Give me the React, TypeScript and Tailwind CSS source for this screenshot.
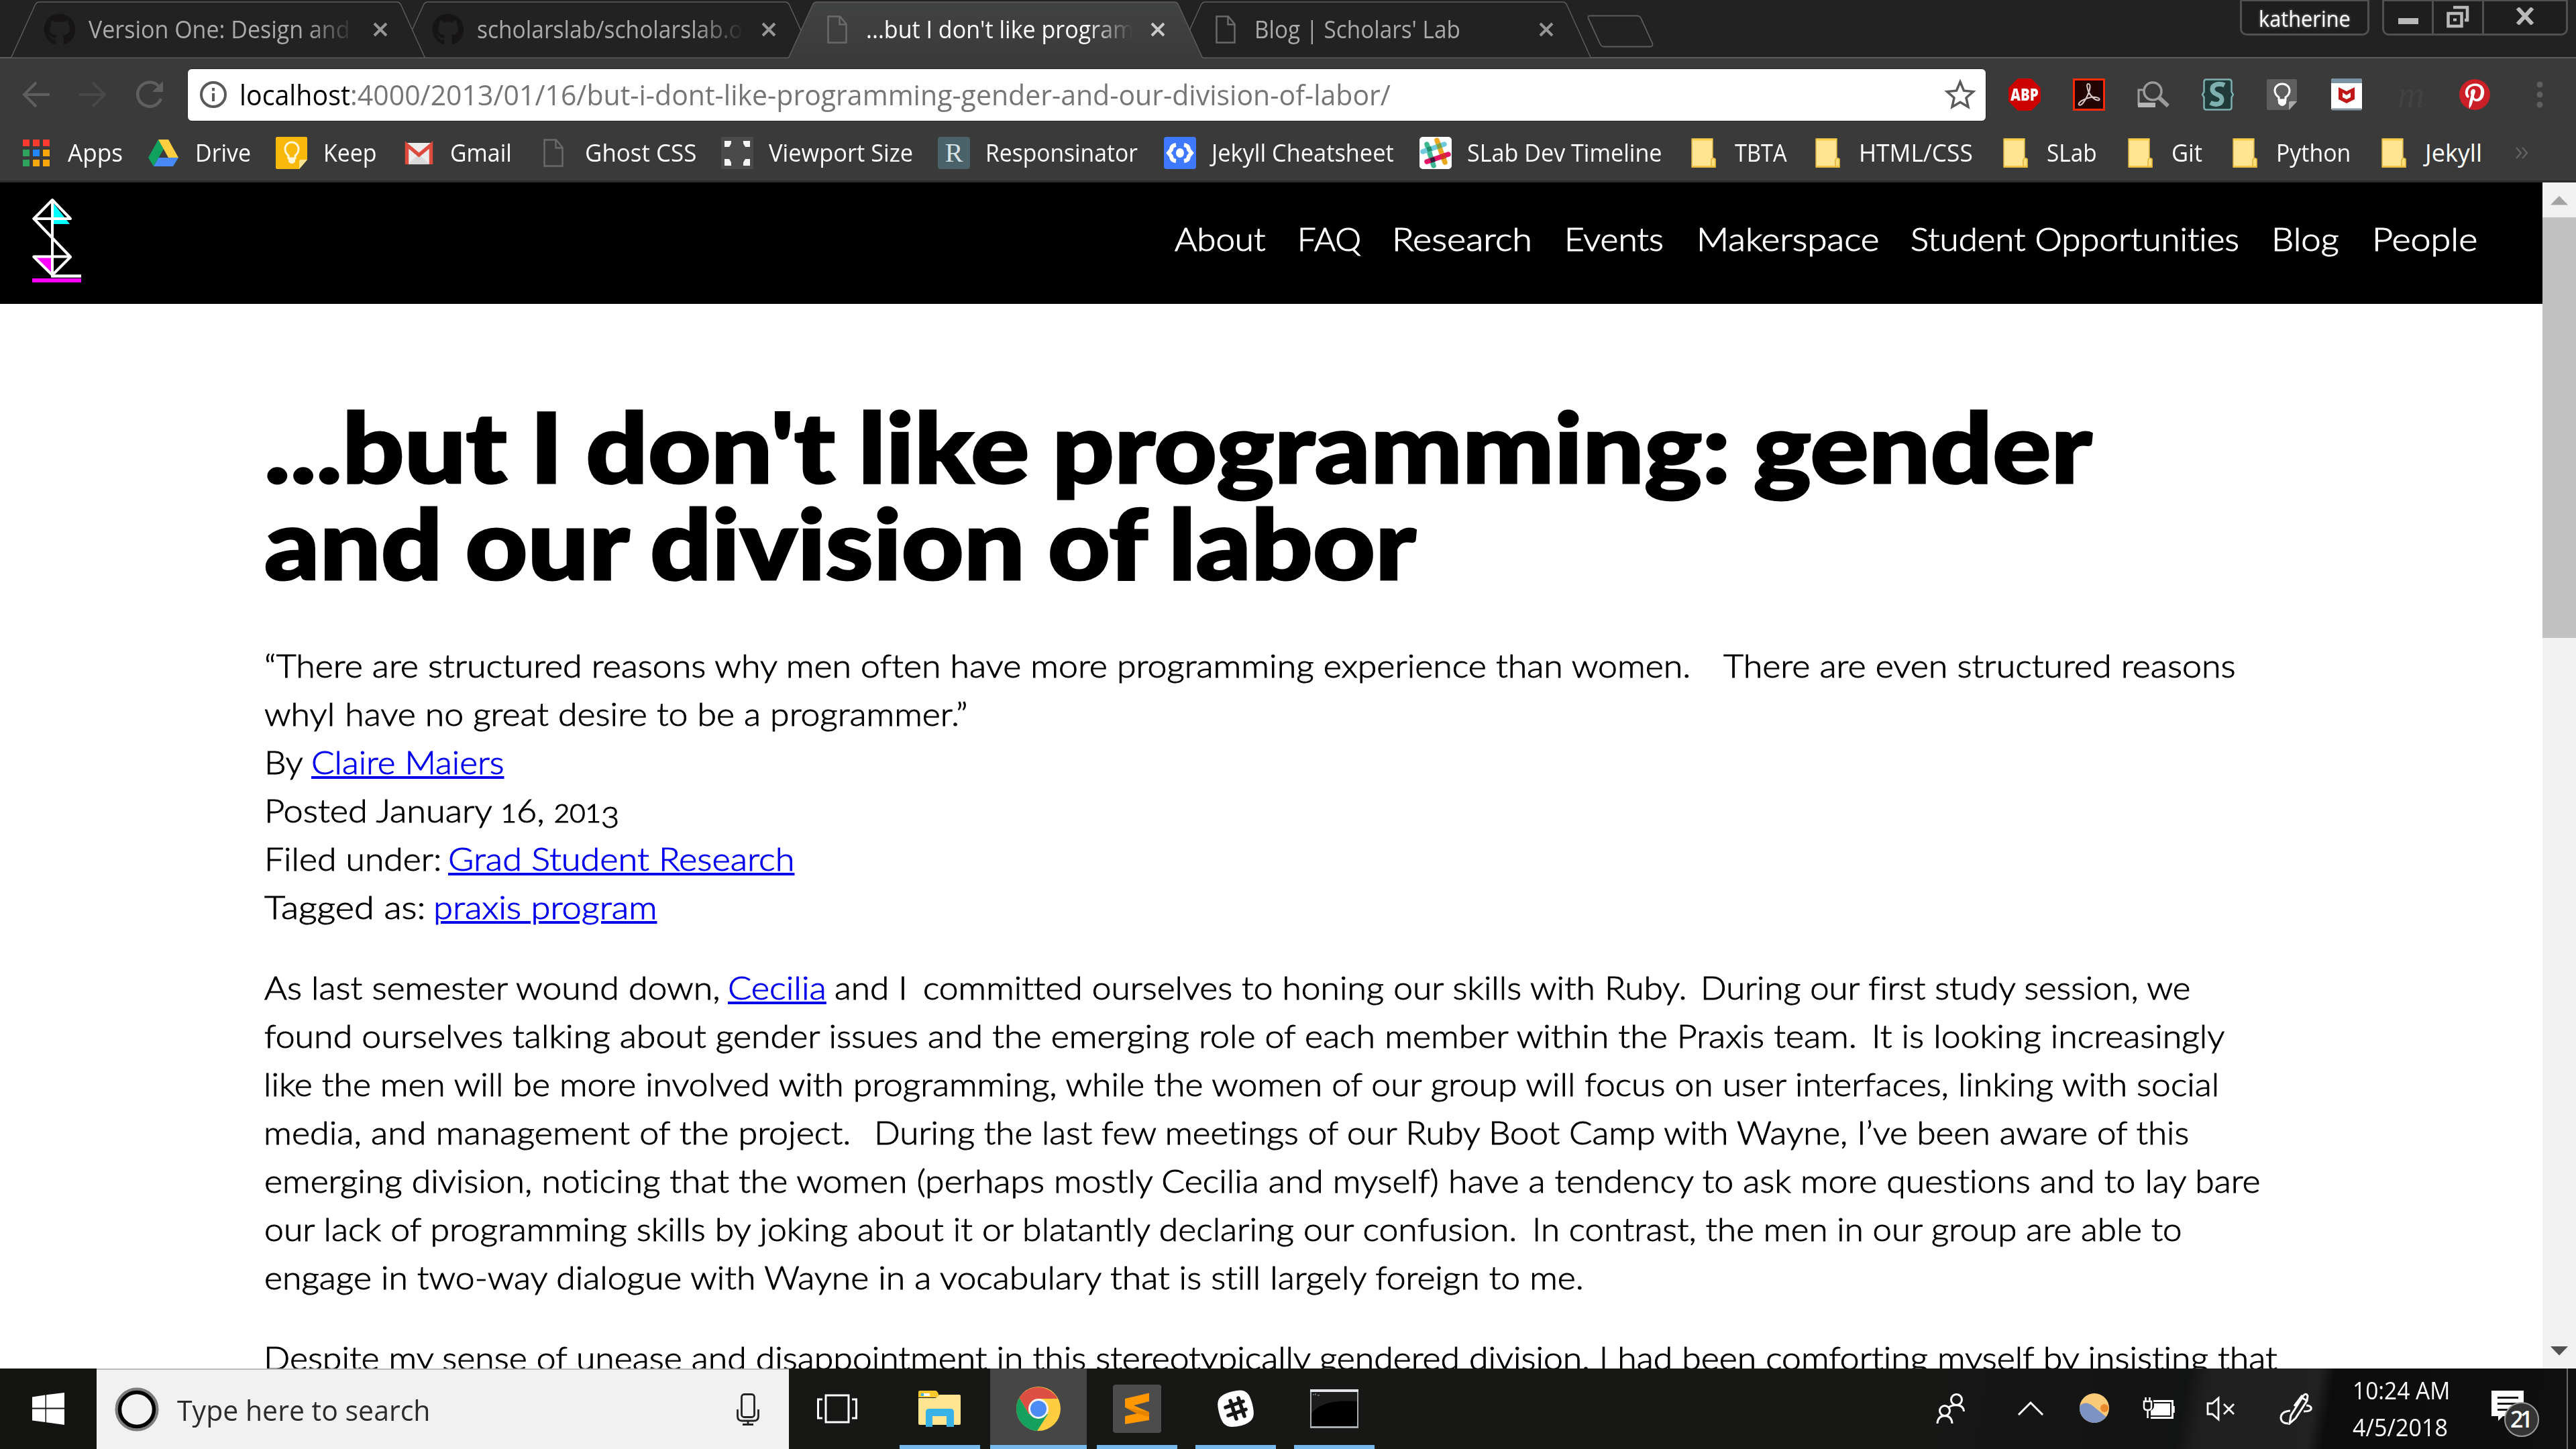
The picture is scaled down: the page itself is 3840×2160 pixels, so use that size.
import { useLayoutEffect, useRef, useState, type ReactNode } from "react";
import { FaGithub, FaPinterestP } from "react-icons/fa";

/* Text squeezed or stretched horizontally to an exact width. */
function Fit({ w, children, className = "" }: { w: number; children: ReactNode; className?: string }) {
  const ref = useRef<HTMLSpanElement>(null);
  const [scale, setScale] = useState(1);
  useLayoutEffect(() => {
    if (ref.current && ref.current.offsetWidth > 0) setScale(w / ref.current.offsetWidth);
  }, [w]);
  return (
    <span className="block shrink-0 whitespace-pre" style={{ width: w }}>
      <span ref={ref} className={`inline-block origin-left ${className}`} style={{ transform: `scaleX(${scale})` }}>
        {children}
      </span>
    </span>
  );
}

type Seg = [text: ReactNode, from: number, to: number, link?: boolean];

/* A line made of runs, each with its own start and end. */
function Line({ segs, origin }: { segs: Seg[]; origin: number }) {
  return (
    <div className="flex">
      {segs.map(([text, from, to, link], i) => (
        <div key={i} style={{ marginLeft: from - (i ? segs[i - 1][2] : origin) }}>
          <Fit
            w={to - from}
            className={link ? "text-[#0000ee] underline decoration-[4px] underline-offset-[3px]" : ""}
          >
            {text}
          </Fit>
        </div>
      ))}
    </div>
  );
}

const PageIcon = () => (
  <svg viewBox="0 0 30 42" className="h-[42px] w-[30px] shrink-0" fill="none" stroke="#6a6a6a" strokeWidth="2.5">
    <path d="M1.5 1.5H19L28.5 13V40.500H1.500Z" />
    <path d="M18.500 2V13.500H28" />
  </svg>
);

function Tab({
  active,
  icon,
  title,
  w,
  fade,
  z,
}: {
  active?: boolean;
  icon: "git" | "page";
  title: string;
  w: number;
  fade?: boolean;
  z: string;
}) {
  return (
    <div className={`relative -mr-[40.700px] h-[87px] w-[620px] shrink-0 ${z}`}>
      <svg viewBox="0 0 620 87" className="absolute inset-0 h-full w-full">
        <defs>
          <linearGradient id="activeTab" x1="0" y1="0" x2="0" y2="1">
            <stop offset="0" stopColor="#414342" />
            <stop offset="1" stopColor="#3a3a3a" />
          </linearGradient>
        </defs>
        <path
          d="M0 87Q2 86 3 83L37 8Q39 3 44 3H576Q581 3 583 8L617 83Q618 86 620 87Z"
          fill={active ? "url(#activeTab)" : "#222222"}
        />
        <path
          d="M0 87Q2 86 3 83L37 8Q39 3 44 3H576Q581 3 583 8L617 83Q618 86 620 87"
          fill="none"
          stroke="#5c5c5c"
          strokeWidth="1.5"
        />
        {!active && <path d="M0 86.300H620" stroke="#5c5c5c" strokeWidth="1.5" />}
      </svg>
      <div className="relative flex h-[88px] items-center pl-[50px]">
        <div className="flex w-[67px] items-center">
          {icon === "git" ? (
            <FaGithub className="h-[48px] w-[48px] text-[#161414]" />
          ) : (
            <div className="ml-[9px]">
              <PageIcon />
            </div>
          )}
        </div>
        <div
          className={`flex h-[60px] w-[398px] items-center text-[36px] leading-[60px] ${
            active ? "text-white" : "text-[#aaaaaa]"
          } ${fade ? "[mask-image:linear-gradient(to_right,black_82%,transparent_100%)]" : ""}`}
        >
          <Fit w={w}>{title}</Fit>
        </div>
        <svg viewBox="0 0 24 24" className="ml-[25px] h-[24px] w-[24px]" stroke={active ? "#c9c9c9" : "#969696"} strokeWidth="4">
          <path d="M3 3L21 21M21 3L3 21" />
        </svg>
      </div>
    </div>
  );
}

const Folder = () => (
  <svg viewBox="0 0 48 48" className="h-[48px] w-[48px]">
    <path d="M7 3H38V32L42 33V45H7Z" fill="#ffe591" stroke="#dbb343" strokeWidth="1.500" />
    <path d="M8 4H38" stroke="#f6cf4a" strokeWidth="3" />
    <path d="M36 45V34Q38 30 42 33V45Z" fill="#fde07b" stroke="#e0b33a" strokeWidth="1.500" />
    <path d="M7 44.500H42" stroke="#edbf3b" strokeWidth="2.500" />
  </svg>
);

const bookmarkIcons: Record<string, ReactNode> = {
  apps: (
    <svg viewBox="0 0 48 48" className="h-[48px] w-[48px]">
      {[0, 1, 2].map((r) =>
        [0, 1, 2].map((c) => (
          <rect
            key={`${r}${c}`}
            x={4 + c * 15}
            y={4 + r * 15}
            width="10"
            height="10"
            fill={[["#fb3b30", "#fb3b30", "#fb3b30"], ["#2ea35b", "#2387fb", "#f9a60a"], ["#2ea35b", "#f9a60a", "#f9a60a"]][r][c]}
          />
        )),
      )}
    </svg>
  ),
  drive: (
    <svg viewBox="0 0 48 48" className="h-[48px] w-[48px]">
      <path d="M16 4L24 18L9 44L1 31Z" fill="#11a15e" />
      <path d="M16 4H31L46 31H31Z" fill="#ffcf41" />
      <path d="M16.500 31H46L38 44H9Z" fill="#4688f4" />
    </svg>
  ),
  keep: (
    <svg viewBox="0 0 48 48" className="h-[48px] w-[48px]">
      <path d="M2 0H45Q47 0 47 2V34L35 48H2Q0 48 0 46V2Q0 0 2 0Z" fill="#f8b90c" />
      <path d="M47 34L35 48V36Q35 34 37 34Z" fill="#fde293" />
      <path d="M19 28Q14 24 14 18A10 10 0 0 1 34 18Q34 24 29 28V32H19Z" fill="none" stroke="#fff5d8" strokeWidth="3" />
      <path d="M19 33H29V37Q27 40 24 40Q21 40 19 37Z" fill="#fff5d8" />
    </svg>
  ),
  gmail: (
    <svg viewBox="0 0 48 48" className="h-[48px] w-[48px]">
      <rect x="4" y="9" width="41" height="32" rx="3" fill="#ececec" />
      <path d="M8 41L24 26L41 41Z" fill="#d9d9d9" />
      <path d="M6.500 41V12L24.500 27L42.500 12V41" fill="none" stroke="#dd4b3e" strokeWidth="5.500" />
    </svg>
  ),
  page: (
    <div className="ml-[9px] flex">
      <PageIcon />
    </div>
  ),
  viewport: (
    <svg viewBox="0 0 48 48" className="h-[48px] w-[48px]">
      <rect width="48" height="48" fill="#4a4a4a" />
      <g fill="#f4f4f4">
        <path d="M5 6H15V10L12 15H5Z" />
        <path d="M33 6H43V15H36L33 10Z" />
        <path d="M5 33H12L15 38V43H5Z" />
        <path d="M36 33H43V43H33V38Z" />
      </g>
    </svg>
  ),
  resp: (
    <div className="flex h-[48px] w-[48px] items-center justify-center rounded-[4px] bg-[#4a636b] font-['Liberation_Serif',serif] text-[40px] leading-none text-[#d9e2e4]">
      R
    </div>
  ),
  cheat: (
    <svg viewBox="0 0 48 48" className="h-[48px] w-[48px]">
      <rect width="48" height="48" rx="4" fill="#3f79ff" />
      <path d="M18 12Q11 13 11 19L7 24L11 29Q11 35 18 36M30 12Q37 13 37 19L41 24L37 29Q37 35 30 36" fill="none" stroke="#fff" strokeWidth="6" />
      <ellipse cx="24" cy="24" rx="6" ry="7" fill="#fff" />
    </svg>
  ),
  slack: (
    <svg viewBox="0 0 48 48" className="h-[48px] w-[48px]">
      <rect width="48" height="48" rx="5" fill="#fff" />
      <g strokeWidth="7.500" strokeLinecap="round">
        <path d="M26 5L38 38" stroke="#eaa820" />
        <path d="M11 11L21 43" stroke="#3eb890" />
        <path d="M5 22L37 11" stroke="#6ecadc" />
        <path d="M11 37L43 26" stroke="#e01563" />
      </g>
      <rect x="11" y="15" width="7" height="7" transform="rotate(-18 14 18)" fill="#1f8f6c" />
      <rect x="26" y="10" width="7" height="7" transform="rotate(-18 30 14)" fill="#7fa23a" />
      <rect x="16" y="31" width="7" height="7" transform="rotate(-18 19 34)" fill="#3c1a3c" />
      <rect x="32" y="26" width="7" height="7" transform="rotate(-18 35 29)" fill="#d2351f" />
    </svg>
  ),
  folder: <Folder />,
};

const bookmarks: [icon: string, label: string, from: number, to: number][] = [
  ["apps", "Apps", 30, 183],
  ["drive", "Drive", 220, 374],
  ["keep", "Keep", 411, 562],
  ["gmail", "Gmail", 600, 763],
  ["page", "Ghost CSS", 801, 1038],
  ["viewport", "Viewport Size", 1075, 1361],
  ["resp", "Responsinator", 1398, 1696],
  ["cheat", "Jekyll Cheatsheet", 1735, 2078],
  ["slack", "SLab Dev Timeline", 2116, 2478],
  ["folder", "TBTA", 2515, 2664],
  ["folder", "HTML/CSS", 2700, 2941],
  ["folder", "SLab", 2980, 3126],
  ["folder", "Git", 3166, 3283],
  ["folder", "Python", 3322, 3504],
  ["folder", "Jekyll", 3544, 3700],
];

function Extensions() {
  return (
    <div className="ml-[33px] flex items-center gap-[48px]">
      <div className="flex h-[48px] w-[48px] items-center justify-center bg-[#cc0000] font-['Open_Sans',sans-serif] text-[24px] font-extrabold leading-none text-white [clip-path:polygon(29%_0,71%_0,100%_29%,100%_71%,71%_100%,29%_100%,0_71%,0_29%)]">
        <Fit w={42}>ABP</Fit>
      </div>
      <svg viewBox="0 0 48 48" className="h-[48px] w-[48px]">
        <rect x="1.500" y="1.500" width="45" height="45" fill="#230404" stroke="#fb2a05" strokeWidth="3" />
        <path
          d="M23 8C27 8 26 16 22 25C18 34 12 42 9 39C7 36 16 30 27 28C36 27 42 30 39 32C35 34 27 28 23 19C21 13 20 8 23 8Z"
          fill="none"
          stroke="#d8c8c8"
          strokeWidth="2"
        />
      </svg>
      <svg viewBox="0 0 48 48" className="h-[48px] w-[48px]" fill="none" stroke="#9b9b9b">
        <path d="M9 17H2V39H26" strokeWidth="3" />
        <path d="M1 36H27V43H1Z" fill="#b5b5b5" stroke="none" />
        <circle cx="23" cy="19" r="13" strokeWidth="3.500" fill="#3a3a3a" />
        <path d="M32 28L46 41" strokeWidth="6" />
      </svg>
      <svg viewBox="0 0 48 48" className="h-[48px] w-[48px]">
        <path
          d="M7 1.500H41Q44.500 1.500 44.500 5V20L47 24L44.500 28V43Q44.500 46.500 41 46.500H7Q3.500 46.500 3.500 43V28L1 24L3.500 20V5Q3.500 1.500 7 1.500Z"
          fill="#1f3a38"
          stroke="#7fb0b0"
          strokeWidth="2.500"
        />
        <path d="M34 10C26 6 15 9 16 17C17 25 31 23 30 32C29 39 20 40 13 36" fill="none" stroke="#7fb0b0" strokeWidth="7" />
      </svg>
      <svg viewBox="0 0 48 48" className="h-[48px] w-[48px]">
        <path d="M3 1H44Q46 1 46 3V35L35 47H3Q1 47 1 45V3Q1 1 3 1Z" fill="#5e5e5e" />
        <path d="M46 34L34 47V36Q34 34 36 34Z" fill="#a9a9a9" />
        <path d="M19 28Q13 24 13 18A11 10 0 0 1 35 18Q35 24 29 28V32H19Z" fill="none" stroke="#fff" strokeWidth="3" />
        <path d="M18 32H30V37Q27 41 24 41Q21 41 18 37Z" fill="#fff" />
      </svg>
      <svg viewBox="0 0 48 48" className="h-[48px] w-[48px]">
        <rect x="1" y="0" width="46" height="47" rx="3" fill="#fff" />
        <path d="M1 7V3Q1 0 4 0H44Q47 0 47 3V7Z" fill="#7993a5" />
        <path d="M2 46H46" stroke="#8797a1" strokeWidth="3" />
        <path d="M12 13L24 19L36 13V31L24 37L12 31Z" fill="#c01818" />
        <path d="M18 21L24 25L30 21V28L24 31L18 28Z" fill="#fff" />
      </svg>
      <div className="flex h-[48px] w-[48px] items-center justify-center font-['Liberation_Serif',serif] text-[56px] italic leading-none text-[#424242]">
        m
      </div>
      <div className="flex h-[48px] w-[48px] items-center">
        <div className="flex h-[46px] w-[46px] items-center justify-center rounded-full bg-[#cb2027]">
          <FaPinterestP className="mt-[3px] h-[38px] w-[34px] text-white" />
        </div>
      </div>
      <svg viewBox="0 0 48 48" className="h-[48px] w-[48px]" fill="#5f5f5f">
        <circle cx="24" cy="9" r="4.500" />
        <circle cx="24" cy="24" r="4.500" />
        <circle cx="24" cy="39" r="4.500" />
      </svg>
    </div>
  );
}

function WindowControls() {
  return (
    <div className="ml-auto flex items-start">
      <div className="mr-[19px] flex h-[53px] w-[193px] justify-center rounded-b-[10px] border-[3px] border-t-2 border-[#505050] bg-[#1e1e1e] text-[33px] leading-[51px] text-white [text-shadow:0_0_4px_#999]">
        <Fit w={137}>katherine</Fit>
      </div>
      <div className="mr-[12px] flex h-[53px] w-[277px] rounded-b-[10px] border-[3px] border-t-2 border-[#505050] bg-[#1e1e1e]">
        <div className="flex w-[74px] justify-center border-r-[3px] border-[#505050] pt-[25px]">
          <div className="h-[9px] w-[30px] bg-[#b9b9b9]" />
        </div>
        <div className="flex w-[75px] justify-center border-r-[3px] border-[#505050] pt-[6px]">
          <svg viewBox="0 0 34 34" className="h-[34px] w-[34px]" fill="none" stroke="#b9b9b9" strokeWidth="4.500">
            <path d="M10 3H31V22H27" />
            <rect x="2.500" y="12" width="20" height="19" />
            <rect x="10" y="19.500" width="5" height="4" fill="#b9b9b9" stroke="none" />
          </svg>
        </div>
        <div className="flex flex-1 justify-center pt-[9px]">
          <svg viewBox="0 0 30 26" className="h-[26px] w-[30px]" stroke="#b9b9b9" strokeWidth="6">
            <path d="M4 1L26 25M26 1L4 25" />
          </svg>
        </div>
      </div>
    </div>
  );
}

function Chrome() {
  return (
    <header className="h-[272px] border-b-[3px] border-[#2a2a2a] bg-[#3a3a3a] font-['Open_Sans','Noto_Sans',sans-serif]">
      <div className="flex h-[87px] items-start border-b-2 border-[#5c5c5c] bg-[#222222]">
        <div className="flex pl-[15px]">
          <Tab icon="git" title="Version One: Design and" w={390} fade z="z-10" />
          <Tab icon="git" title="scholarslab/scholarslab.o" w={396} fade z="z-0" />
          <Tab icon="page" title="...but I don't like program" w={400} fade active z="z-20" />
          <Tab icon="page" title="Blog | Scholars' Lab" w={307} z="z-0" />
        </div>
        <svg viewBox="0 0 102 50" className="ml-[33px] mt-[22px] h-[50px] w-[102px]" fill="none" stroke="#5c5c5c" strokeWidth="1.800">
          <path d="M5 1.500H75Q79 1.500 81 5L98 42Q100 47 95 47.500H26Q22 47.500 20 43L3 6Q1 1.500 5 1.500Z" />
        </svg>
        <WindowControls />
      </div>
      <div className="flex h-[108px] items-center pl-[30px]">
        <div className="flex gap-[36px]">
          <svg viewBox="0 0 48 48" className="h-[48px] w-[48px]" fill="none" stroke="#5f5f5f" strokeWidth="4">
            <path d="M44 24H7M24 6L6 24L24 42" />
          </svg>
          <svg viewBox="0 0 48 48" className="h-[48px] w-[48px]" fill="none" stroke="#484848" strokeWidth="4">
            <path d="M4 24H41M24 6L42 24L24 42" />
          </svg>
          <svg viewBox="0 0 48 48" className="h-[48px] w-[48px]" fill="none" stroke="#5f5f5f" strokeWidth="4.500">
            <path d="M38 11A18 18 0 1 0 42 30" />
            <path d="M45 4V20H29Z" fill="#5f5f5f" stroke="none" />
          </svg>
        </div>
        <div className="ml-[33px] flex h-[79px] w-[2682px] items-center rounded-[7px] border border-[#262626] bg-white">
          <svg viewBox="0 0 44 44" className="ml-[16px] h-[44px] w-[44px]" fill="none" stroke="#5a5a5a" strokeWidth="4">
            <circle cx="22" cy="22" r="18" />
            <path d="M22 20V32M22 12V16.500" />
          </svg>
          <div className="ml-[17px] flex text-[42px] leading-[60px] text-[#757575]">
            <Fit w={165} className="text-black">
              localhost
            </Fit>
            <Fit w={1551}>:4000/2013/01/16/but-i-dont-like-programming-gender-and-our-division-of-labor/</Fit>
          </div>
          <svg viewBox="0 0 48 48" className="ml-auto mr-[14px] h-[48px] w-[48px]" fill="none" stroke="#5a5a5a" strokeWidth="3.500">
            <path d="M24 5L29.500 18.200L43.500 19.500L33 28.800L36 42.500L24 35.300L12 42.500L15 28.800L4.500 19.500L18.500 18.200Z" />
          </svg>
        </div>
        <Extensions />
      </div>
      <div className="flex h-[66px] items-center text-[36px] leading-[60px] text-white">
        {bookmarks.map(([icon, label, from, to], i) => (
          <div
            key={label}
            className="flex shrink-0 items-center"
            style={{ marginLeft: from - (i ? bookmarks[i - 1][3] : 0) }}
          >
            <div className="w-[71px] shrink-0">{bookmarkIcons[icon]}</div>
            <div className="-mt-[1px]">
              <Fit w={to - from - 71}>{label}</Fit>
            </div>
          </div>
        ))}
        <svg viewBox="0 0 20 18" className="ml-[50px] h-[18px] w-[20px]" fill="none" stroke="#636363" strokeWidth="2.500">
          <path d="M1 1L8 9L1 17M10 1L17 9L10 17" />
        </svg>
      </div>
    </header>
  );
}

const nav: Seg[] = [
  ["About", 1751, 1886],
  ["FAQ", 1934, 2029],
  ["Research", 2075, 2284],
  ["Events", 2332, 2480],
  ["Makerspace", 2529, 2801],
  ["Student Opportunities", 2848, 3338],
  ["Blog", 3386, 3487],
  ["People", 3536, 3693],
];

/* Text figures: low digits sit at x-height, 3 hangs below the baseline. */
const Low = ({ children }: { children: ReactNode }) => (
  <span className="text-[37px] leading-none [-webkit-text-stroke:1.2px_black]">{children}</span>
);

const postedOn = (
  <>
    Posted January <Low>1</Low>6, <Low>201</Low>
    <span className="relative top-[8px] text-[43px] leading-none">3</span>
  </>
);

const meta: Seg[][] = [
  [
    ["“There are structured reasons why men often have more programming experience than women.", 394, 2521],
    ["There are even structured reasons", 2569, 3333],
  ],
  [["whyI have no great desire to be a programmer.”", 394, 1442]],
  [["By", 394, 452], ["Claire Maiers", 464, 751, true]],
  [[postedOn, 394, 923]],
  [["Filed under:", 394, 658], ["Grad Student Research", 668, 1184, true]],
  [["Tagged as:", 394, 635], ["praxis program", 646, 979, true]],
];

const body: Seg[][] = [
  [
    ["As last semester wound down,", 394, 1073],
    ["Cecilia", 1085, 1232, true],
    ["and I", 1244, 1353],
    ["committed ourselves to honing our skills with Ruby.", 1376, 2514],
    ["During our first study session, we", 2535, 3265],
  ],
  [
    ["found ourselves talking about gender issues and the emerging role of each member within the Praxis team.", 394, 2768],
    ["It is looking increasingly", 2790, 3316],
  ],
  [["like the men will be more involved with programming, while the women of our group will focus on user interfaces, linking with social", 393, 3308]],
  [
    ["media, and management of the project.", 393, 1268],
    ["During the last few meetings of our Ruby Boot Camp with Wayne, I’ve been aware of this", 1303, 3263],
  ],
  [["emerging division, noticing that the women (perhaps mostly Cecilia and myself) have a tendency to ask more questions and to lay bare", 394, 3370]],
  [
    ["our lack of programming skills by joking about it or blatantly declaring our confusion.", 394, 2262],
    ["In contrast, the men in our group are able to", 2284, 3253],
  ],
  [["engage in two-way dialogue with Wayne in a vocabulary that is still largely foreign to me.", 394, 2361]],
];

const next: Seg[] = [
  ["Despite my sense of unease and disappointment in this stereotypically gendered division, I had been comforting myself by insisting that", 393, 3395],
];

function Page() {
  return (
    <div className="flex h-[1768px] font-['Lato',sans-serif] [font-variant-ligatures:none]">
      <div className="h-full w-[3790px] overflow-hidden bg-white">
        <div className="flex h-[181px] bg-black pl-[48px]">
          <svg viewBox="0 0 76 130" className="mt-[22px] h-[130px] w-[76px]">
            <path d="M31 8V40H56Z" fill="#00ffff" />
            <path d="M3 88H30V116Z" fill="#ff00ff" />
            <g fill="none" stroke="#fff" strokeWidth="4" strokeLinejoin="round" strokeLinecap="round">
              <path d="M30 4L2.500 32H57L30 4V116" />
              <path d="M2.500 32L57 89L30 116L2.500 89" />
              <path d="M2.500 88.500H56" />
            </g>
            <path d="M28 117.500H73" stroke="#fff" strokeWidth="4.500" />
            <path d="M0 124H73" stroke="#ff00ff" strokeWidth="6" />
          </svg>
          <div className="ml-[1627px] pt-[48px] text-[48px] font-light leading-[72px] text-white [-webkit-text-stroke:1px_white]">
            <Line segs={nav} origin={1751} />
          </div>
        </div>
        <article className="pl-[393px] pt-[140px] text-[48px] font-light leading-[72px] text-black [-webkit-text-stroke:0.9px]">
          <h1 className="text-[144px] font-black leading-[144px] [-webkit-text-stroke:3px_black] [word-spacing:-4px]">
            <Line segs={[["...but I don't like programming: gender", 394, 3118]]} origin={393} />
            <Line segs={[["and our division of labor", 394, 2111]]} origin={393} />
          </h1>
          <div className="mt-[75px]">
            {meta.map((l, i) => (
              <Line key={i} segs={l} origin={393} />
            ))}
          </div>
          <div className="mt-[48px]">
            {body.map((l, i) => (
              <Line key={i} segs={l} origin={393} />
            ))}
          </div>
          <div className="mt-[48px]">
            <Line segs={next} origin={393} />
          </div>
        </article>
      </div>
      <div className="flex h-full w-[50px] flex-col items-center bg-[#f1f1f1]">
        <svg viewBox="0 0 50 52" className="h-[52px] w-[50px]">
          <path d="M12 33.500L25 20L38 33.500Z" fill="#a3a3a3" />
        </svg>
        <div className="h-[627px] w-full bg-[#c1c1c1]" />
        <svg viewBox="0 0 50 52" className="mt-auto h-[52px] w-[50px]">
          <path d="M12 19L25 32.500L38 19Z" fill="#505050" />
        </svg>
      </div>
    </div>
  );
}

function Task({ children, active }: { children: ReactNode; active?: boolean }) {
  return (
    <div className={`flex h-full w-[144px] flex-col items-center ${active ? "bg-[#464646]" : ""}`}>
      <div className="flex h-[114px] items-center pt-[6px]">{children}</div>
      <div className={`h-[6px] bg-[#76b9ed] ${active ? "w-full" : "w-[120px]"}`} />
    </div>
  );
}

function Taskbar() {
  return (
    <footer className="flex h-[120px] bg-[linear-gradient(100deg,#131312_0%,#171716_30%,#171716_75%,#121313_84.500%,#1f1f1f_85.300%,#212121_89.600%,#0c0c0c_90.200%,#101010_100%)] font-['Open_Sans','Noto_Sans',sans-serif] text-white">
      <div className="flex w-[144px] items-center justify-center">
        <svg viewBox="0 0 48 48" className="h-[48px] w-[48px]" fill="#fff">
          <path d="M0 6.500L19.500 3.500V22.500H0ZM21 3.300L48 0V22.500H21ZM0 24.500H19.500V44L0 41.500ZM21 24.500H48V48L21 44.200Z" />
        </svg>
      </div>
      <div className="flex w-[1032px] items-center border-t-[2px] border-[#bcbcbc] bg-[#f1f1f1]">
        <svg viewBox="0 0 66 66" className="ml-[27px] h-[66px] w-[66px]" fill="none">
          <circle cx="33" cy="33" r="29" stroke="#7d7d7d" strokeWidth="7" />
          <circle cx="33" cy="33" r="25.500" stroke="#000" strokeWidth="5.500" />
        </svg>
        <div className="ml-[27px] mt-[1px] text-[42px] leading-[60px] text-[#2b2b2b]">
          <Fit w={378}>Type here to search</Fit>
        </div>
        <svg viewBox="0 0 34 48" className="ml-auto mr-[44px] h-[48px] w-[34px]" fill="none" stroke="#222" strokeWidth="2.800">
          <rect x="7.500" y="1.500" width="19" height="34" rx="4" />
          <path d="M1.500 24V34Q1.500 41 8 41H26Q32.500 41 32.500 34V24M17 41V46M9 46.500H25" />
        </svg>
      </div>
      <div className="flex w-[144px] items-center justify-center">
        <svg viewBox="0 0 62 44" className="h-[44px] w-[62px]" fill="none" stroke="#fff" strokeWidth="3">
          <rect x="14" y="2" width="34" height="40" />
          <path d="M9 8H2.500V36H9M53 8H59.500V36H53" />
        </svg>
      </div>
      <div className="ml-[9px] flex gap-[3px]">
        <Task>
          <svg viewBox="0 0 64 54" className="h-[54px] w-[64px]">
            <path d="M0 2Q0 0 2 0H25Q28 0 30 5L31 10H0Z" fill="#fbc92d" />
            <path d="M0 11H25Q29 10 31 6H61Q63 6 63 8V49Q63 51 61 51H2Q0 51 0 49Z" fill="#ffe591" />
            <rect x="4" y="4" width="13" height="4" fill="#fff" />
            <rect x="4" y="4" width="4" height="4" fill="#3fb8e8" />
            <path d="M11 54V32Q11 27 16 27H48Q53 27 53 32V54H42V38H21V54Z" fill="#39b2e8" />
          </svg>
        </Task>
        <Task active>
          <svg viewBox="0 0 66 66" className="h-[66px] w-[66px]">
            <circle cx="33" cy="33" r="33" fill="#ffcd40" />
            <path d="M33 33L19 41L4.500 16.500A33 33 0 0 0 31 66L47 41Z" fill="#16a05d" />
            <path d="M4.500 16.500A33 33 0 0 1 61.500 18H33L19 41Z" fill="#dd4f43" />
            <circle cx="33" cy="33" r="15" fill="#f4f4f4" />
            <circle cx="33" cy="33" r="12" fill="#4b8bf5" />
          </svg>
        </Task>
        <Task>
          <svg viewBox="0 0 72 72" className="h-[72px] w-[72px]">
            <rect width="72" height="72" rx="4" fill="#4c4c4c" />
            <path d="M54 41V53L18 59V47L40 42L18 34V21L54 12.500V25L31 31Z" fill="#ff9800" />
            <path d="M18 34L54 41V48L33 42Z" fill="#e68400" />
          </svg>
        </Task>
        <Task>
          <svg viewBox="0 0 56 56" className="h-[56px] w-[56px]">
            <path d="M20 3C40 -3 47 1 52 18C58 40 55 47 37 53C16 58 9 54 4 37C-2 16 1 9 20 3Z" fill="#fff" />
            <g stroke="#171716" strokeWidth="5.500" strokeLinecap="round">
              <path d="M20 16L29 43M32 12L41 39M13 26L39 17M17 38L43 29" />
            </g>
          </svg>
        </Task>
        <Task>
          <svg viewBox="0 0 72 58" className="h-[58px] w-[72px]">
            <rect width="72" height="58" fill="#a9aeb3" />
            <rect x="0" y="0" width="72" height="4" fill="#e2e6ea" />
            <rect x="2" y="4" width="68" height="51" fill="#1c1c1c" />
            <path d="M2 36Q18 14 70 18V55H2Z" fill="#000" />
            <path d="M5 7V9M8 6V9M11 9H14" stroke="#aaa" strokeWidth="1" />
          </svg>
        </Task>
      </div>
      <div className="ml-auto mr-[12px] flex items-center">
        <svg viewBox="0 0 48 48" className="h-[48px] w-[48px]" fill="none" stroke="#fff" strokeWidth="3">
          <circle cx="32.500" cy="10.500" r="8" />
          <path d="M21 22Q25 18.500 32.500 18.500Q43 19 43.500 28" />
          <circle cx="15" cy="27" r="7.500" />
          <path d="M4 46Q4.500 35 15 34.500Q25.500 35 26 46" />
        </svg>
        <svg viewBox="0 0 48 48" className="ml-[71px] h-[48px] w-[48px]" fill="none" stroke="#fff" strokeWidth="3">
          <path d="M6 33L24 15L42 33" />
        </svg>
        <svg viewBox="0 0 48 48" className="ml-[47px] h-[48px] w-[48px]">
          <defs>
            <clipPath id="weather">
              <circle cx="24" cy="23" r="22" />
            </clipPath>
          </defs>
          <g clipPath="url(#weather)">
            <rect width="48" height="48" fill="#f9ca78" />
            <circle cx="39" cy="23" r="6" fill="#e98a2c" />
            <path d="M0 22Q10 10 22 20L44 38L30 48H0Z" fill="#7c93c3" />
          </g>
        </svg>
        <svg viewBox="0 0 48 48" className="ml-[48px] h-[48px] w-[48px]" fill="none" stroke="#fff" strokeWidth="3">
          <path d="M16 12.500H44.500V37.500H12" />
          <path d="M17 16H41V34H12V27Q17 24 17 20Z" fill="#fff" stroke="none" />
          <path d="M46.500 20V30M2 13V22Q2 26 7.500 26Q13 26 13 22V13ZM4.500 13V7M10.500 13V7M7.500 26V38" strokeWidth="2.500" />
        </svg>
        <svg viewBox="0 0 48 48" className="ml-[45px] h-[48px] w-[48px]" fill="none" stroke="#fff" strokeWidth="2.800">
          <path d="M4 16H11L20 8V40L11 32H4Z" />
          <path d="M28 17L43 32M43 17L28 32" />
        </svg>
        <svg viewBox="0 0 52 48" className="ml-[63px] h-[48px] w-[52px]" fill="none" stroke="#fff" strokeWidth="3">
          <path d="M36 4Q40 0 42 5L41 12L24 38L15 46L17 34ZM34 8L41 12M22 20L34 4" />
          <path d="M16 27Q2 28 2 38Q3 46 13 46M36 28Q49 28 47 22Q45 19 40 19" />
        </svg>
        <div className="ml-[57px] flex w-[143px] flex-col text-[36px] leading-[55px]">
          <Fit w={145}>10:24 AM</Fit>
          <Fit w={142}>4/5/2018</Fit>
        </div>
        <svg viewBox="0 0 84 76" className="ml-[58px] mt-[8px] h-[76px] w-[84px]">
          <path d="M6 7H54V45H23L16 52V45H6Z" fill="#fff" />
          <path d="M15 17.500H46M15 26.500H46M15 35.500H30" stroke="#171717" strokeWidth="3" />
          <circle cx="51" cy="50" r="25" fill="#343434" stroke="#9a9a9a" strokeWidth="2" />
          <text x="51" y="62" textAnchor="middle" fontSize="34" textLength="34" fontWeight="600" fill="#fff">
            21
          </text>
        </svg>
        <div className="ml-[34px] h-[120px] w-[2px] bg-[#6a6a6a]" />
      </div>
    </footer>
  );
}

export default function App() {
  return (
    <div className="h-[2160px] w-[3840px] overflow-hidden bg-white">
      <Chrome />
      <Page />
      <Taskbar />
    </div>
  );
}
